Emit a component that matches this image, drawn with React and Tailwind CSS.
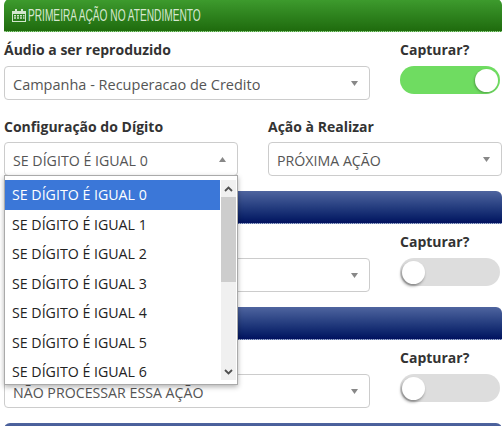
import React from "react";

const font = { fontFamily: '"Open Sans", sans-serif' };

function Caret({ up = false }) {
  return (
    <svg width="7" height="5" viewBox="0 0 7 5" className="shrink-0 fill-[#888]">
      <path d={up ? "M3.500 0 L7 5 L0 5 Z" : "M0 0 L7 0 L3.500 5 Z"} />
    </svg>
  );
}

function Select({ text, up = false, size = "text-[14.2px]" }) {
  return (
    <div className={`flex h-[34px] items-center justify-between rounded-[4px] border border-[#ccc] bg-white pl-[8px] pr-[11px] text-[#555] ${size}`}>
      <span className="truncate pt-[3px]">{text}</span>
      <Caret up={up} />
    </div>
  );
}

function Toggle({ on = false }) {
  return (
    <div className={`flex h-[28px] w-[100px] items-center rounded-full px-[2px] ${on ? "justify-end bg-[#6fdc61]" : "justify-start bg-[#dddddd]"}`}>
      <div className={`h-[23px] w-[23px] rounded-full bg-white ${on ? "shadow-[-1px_1px_2px_rgba(0,0,0,0.25)]" : "shadow-[-1px_2px_3px_rgba(0,0,0,0.4)]"}`} />
    </div>
  );
}

function Head({ green = false, children }) {
  return (
    <div className={`flex h-[33px] items-center rounded-t-[6px] border-b border-dotted border-b-white/50 pl-[8px] ${green ? "bg-gradient-to-b from-[#3e9c2e] to-[#1f6b0d]" : "bg-gradient-to-b from-[#4f659f] to-[#03125f]"}`}>
      {children}
    </div>
  );
}

function Label({ children }) {
  return <div className="text-[14px] font-bold leading-[19px] text-[#333]">{children}</div>;
}

function AudioRow({ text }) {
  return (
    <div className="flex gap-[30px] pt-[8px]">
      <div className="w-[366px]">
        <Label>&nbsp;</Label>
        <div className="mt-[7px]"><Select text={text} /></div>
      </div>
      <div className="w-[100px]">
        <Label>Capturar?</Label>
        <div className="mt-[7px]"><Toggle /></div>
      </div>
    </div>
  );
}

const options = [0, 1, 2, 3, 4, 5, 6];

export default function App() {
  return (
    <div style={font} className="relative h-[426px] w-[503px] overflow-hidden bg-white">
      <div className="-mt-px ml-[4px] w-[498px]">
        <Head green>
          <svg width="14" height="13" viewBox="0 0 14 13" className="mt-[1px] fill-[#d3e6cd]">
            <path d="M3 0h2v2h4V0h2v2h3v11H0V2h3V0Zm-2 5v7h12V5H1Zm1 1h2v1.5H2V6Zm3 0h2v1.5H5V6Zm3 0h2v1.5H8V6Zm3 0h1.500v1.500H11V6ZM2 8.300h2v1.500H2V8.300Zm3 0h2v1.500H5V8.300Zm3 0h2v1.500H8V8.300Zm3 0h1.500v1.500H11V8.300Z" />
          </svg>
          <span
            className="ml-[2px] inline-block origin-left scale-x-[0.615] whitespace-nowrap text-[16.5px] text-[#d7e8d0]"
            style={{ fontFamily: '"Liberation Sans", sans-serif' }}
          >
            PRIMEIRA AÇÃO NO ATENDIMENTO
          </span>
        </Head>

        <div className="flex gap-[30px] pt-[8px]">
          <div className="w-[366px]">
            <Label>Áudio a ser reproduzido</Label>
            <div className="mt-[7px]"><Select text="Campanha - Recuperacao de Credito" size="text-[14.5px]" /></div>
          </div>
          <div className="w-[100px]">
            <Label>Capturar?</Label>
            <div className="mt-[7px]"><Toggle on /></div>
          </div>
        </div>

        <div className="flex gap-[30px] pt-[17px]">
          <div className="w-[234px]">
            <Label>Configuração do Dígito</Label>
            <div className="mt-[6px]"><Select text="SE DÍGITO É IGUAL 0" up /></div>
          </div>
          <div className="w-[234px]">
            <Label>Ação à Realizar</Label>
            <div className="mt-[6px]"><Select text="PRÓXIMA AÇÃO" /></div>
          </div>
        </div>

        <div className="mt-[15px]"><Head /></div>
        <AudioRow text="NÃO PROCESSAR ESSA AÇÃO" />
        <div className="mt-[15px]"><Head /></div>
        <AudioRow text="NÃO PROCESSAR ESSA AÇÃO" />
        <div className="mt-[15px]"><Head /></div>
      </div>

      <div className="absolute left-[4px] top-[175px] h-[210px] w-[234px] border border-[#aaa] bg-white py-[4px] shadow-[0_2px_5px_rgba(0,0,0,0.3)]">
        <div className="flex h-[200px] overflow-hidden">
          <div className="w-[215px] text-[14.2px] text-[#222]">
            {options.map((n) => (
              <div
                key={n}
                className={`flex h-[29.5px] items-center pl-[7px] ${n === 0 ? "bg-[#3b77d8] text-white" : ""}`}
              >
                SE DÍGITO É IGUAL {n}
              </div>
            ))}
          </div>
          <div className="ml-[1px] flex w-[15px] flex-col bg-[#f0f0f0]">
            <div className="flex h-[17px] items-center justify-center">
              <svg width="9" height="6" viewBox="0 0 9 6" className="fill-none stroke-[#505050] stroke-[1.800]"><path d="M1 5 L4.500 1.500 L8 5" /></svg>
            </div>
            <div className="h-[85px] bg-[#cdcdcd]" />
            <div className="mt-auto flex h-[17px] items-center justify-center">
              <svg width="9" height="6" viewBox="0 0 9 6" className="fill-none stroke-[#505050] stroke-[1.800]"><path d="M1 1 L4.500 4.500 L8 1" /></svg>
            </div>
          </div>
        </div>
      </div>
    </div>
  );
}
